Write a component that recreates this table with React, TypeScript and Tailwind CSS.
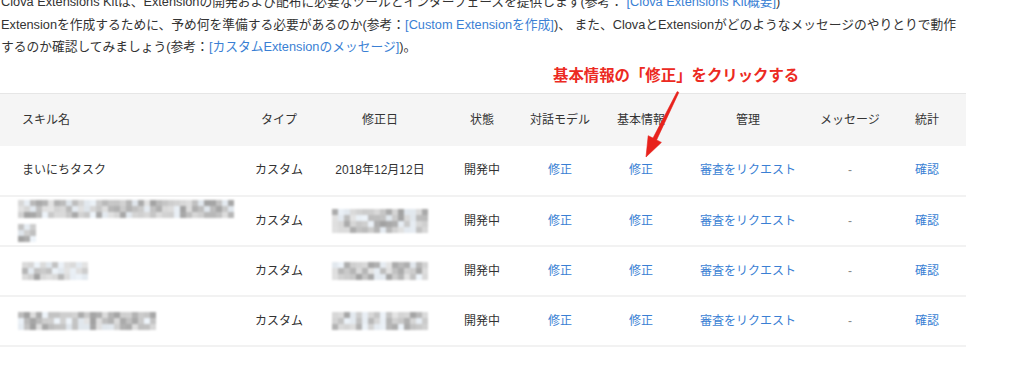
import React from "react"

const font = "font-['Liberation_Sans','Noto_Sans_CJK_JP',sans-serif]"

const cols = [240, 78, 124, 80, 76, 86, 128, 76, 78]

// pixelated placeholder for hidden values
function Mosaic({ w, h, seed, cell = 6 }: { w: number; h: number; seed: number; cell?: number }) {
    const nx = Math.ceil(w / cell)
    const ny = Math.ceil(h / cell)
    const cells = []
    let s = seed
    for (let i = 0; i < nx * ny; i++) {
        s = (s * 9301 + 49297) % 233280
        const r = s / 233280
        const v = Math.round(160 + r * 85)
        const tint = r > 0.8 ? 6 : 0
        cells.push(`rgb(${v - tint},${v},${v + tint})`)
    }
    return (
        <div
            className="grid blur-[0.8px]"
            style={{ gridTemplateColumns: `repeat(${nx}, ${cell}px)`, width: nx * cell, height: ny * cell }}
        >
            {cells.map((c, i) => (
                <div key={i} style={{ background: c, height: cell }} />
            ))}
        </div>
    )
}

function Link({ children }: { children: React.ReactNode }) {
    return <span className="text-[#3a7fd4]">{children}</span>
}

type Row = { name: React.ReactNode; date: React.ReactNode }

const rows: Row[] = [
    { name: "まいにちタスク", date: "2018年12月12日" },
    {
        name: (
            <div className="flex flex-col gap-[6px] -ml-[4px]">
                <Mosaic w={214} h={13} seed={11} />
                <Mosaic w={18} h={15} seed={5} />
            </div>
        ),
        date: <div className="flex justify-center"><Mosaic w={94} h={19} seed={23} /></div>,
    },
    {
        name: <Mosaic w={63} h={16} seed={37} />,
        date: <div className="flex justify-center"><Mosaic w={93} h={14} seed={41} /></div>,
    },
    {
        name: <div className="-ml-[4px]"><Mosaic w={137} h={17} seed={53} /></div>,
        date: <div className="flex justify-center"><Mosaic w={94} h={17} seed={61} /></div>,
    },
]

const headers = ["タイプ", "修正日", "状態", "対話モデル", "基本情報", "管理", "メッセージ", "統計"]

export default function App() {
    return (
        <div className={`relative w-[1024px] h-[372px] overflow-hidden bg-white text-[#333] ${font}`}>
            <p className="-mt-[9px] pl-[1px] text-[12.75px] leading-[22.5px] whitespace-nowrap">
                Clova Extensions Kitは、Extensionの開発および配布に必要なツールとインターフェースを提供します(参考： <Link>[Clova Extensions Kit概要]</Link>)
                <br />
                Extensionを作成するために、予め何を準備する必要があるのか(参考：<Link>[Custom Extensionを作成]</Link>)、 また、ClovaとExtensionがどのようなメッセージのやりとりで動作
                <br />
                するのか確認してみましょう(参考：<Link>[カスタムExtensionのメッセージ]</Link>)。
            </p>

            <table className="mt-[34.5px] w-[966px] table-fixed border-collapse text-[12px]">
                <colgroup>
                    {cols.map((w, i) => (
                        <col key={i} style={{ width: w }} />
                    ))}
                </colgroup>
                <thead>
                    <tr className="h-[52px] bg-[#f5f5f5] border-t border-[#e6e6e6]">
                        <th className="pl-[22px] text-left font-normal">スキル名</th>
                        {headers.map((h) => (
                            <th key={h} className="text-center font-normal">{h}</th>
                        ))}
                    </tr>
                </thead>
                <tbody>
                    {rows.map((r, i) => (
                        <tr key={i} className="h-[50px] border-b-2 border-[#f2f2f2]">
                            <td className="pl-[22px]">{r.name}</td>
                            <td className="text-center">カスタム</td>
                            <td className="text-center">{r.date}</td>
                            <td className="text-center">開発中</td>
                            <td className="text-center text-[#3a7fd4]">修正</td>
                            <td className="text-center text-[#3a7fd4]">修正</td>
                            <td className="text-center text-[#3a7fd4]">審査をリクエスト</td>
                            <td className="text-center text-[#888]">-</td>
                            <td className="text-center text-[#3a7fd4]">確認</td>
                        </tr>
                    ))}
                </tbody>
            </table>

            <div className="absolute left-[553px] top-[66px] text-[15.4px] leading-[20px] font-bold text-[#ec2a22] whitespace-nowrap [text-shadow:0_0_2px_#fff,0_0_2px_#fff,0_0_1px_#fff]">
                基本情報の「修正」をクリックする
            </div>

            <svg className="absolute left-[630px] top-[85px]" width="60" height="80" viewBox="0 0 60 80">
                <polygon
                    points="47.2,6.6 48.8,7.4 26.6,54.9 31.4,57.4 16,72 18.2,50.7 23,53.1"
                    fill="#e8221c"
                    stroke="#e8221c"
                    strokeWidth="0.6"
                    strokeLinejoin="round"
                />
            </svg>
        </div>
    )
}
